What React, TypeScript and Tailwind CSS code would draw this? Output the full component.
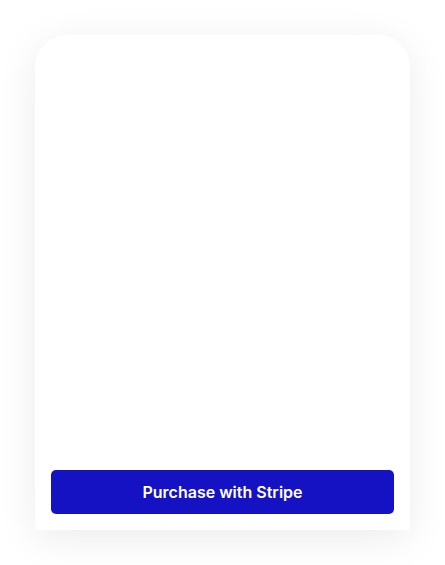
export default function App() {
    return (
        <div className="min-h-screen bg-white p-[35px]" style={{ fontFamily: 'Inter, "Noto Sans", sans-serif' }}>
            <div className="w-[375px] h-[495px] bg-white rounded-t-[32px] shadow-[0_8px_40px_rgba(0,0,0,0.08)] flex flex-col justify-end p-4">
                <button className="w-full h-[44px] bg-[#1512c4] text-white rounded-[5px] text-base font-semibold">
                    Purchase with Stripe
                </button>
            </div>
        </div>
    );
}
